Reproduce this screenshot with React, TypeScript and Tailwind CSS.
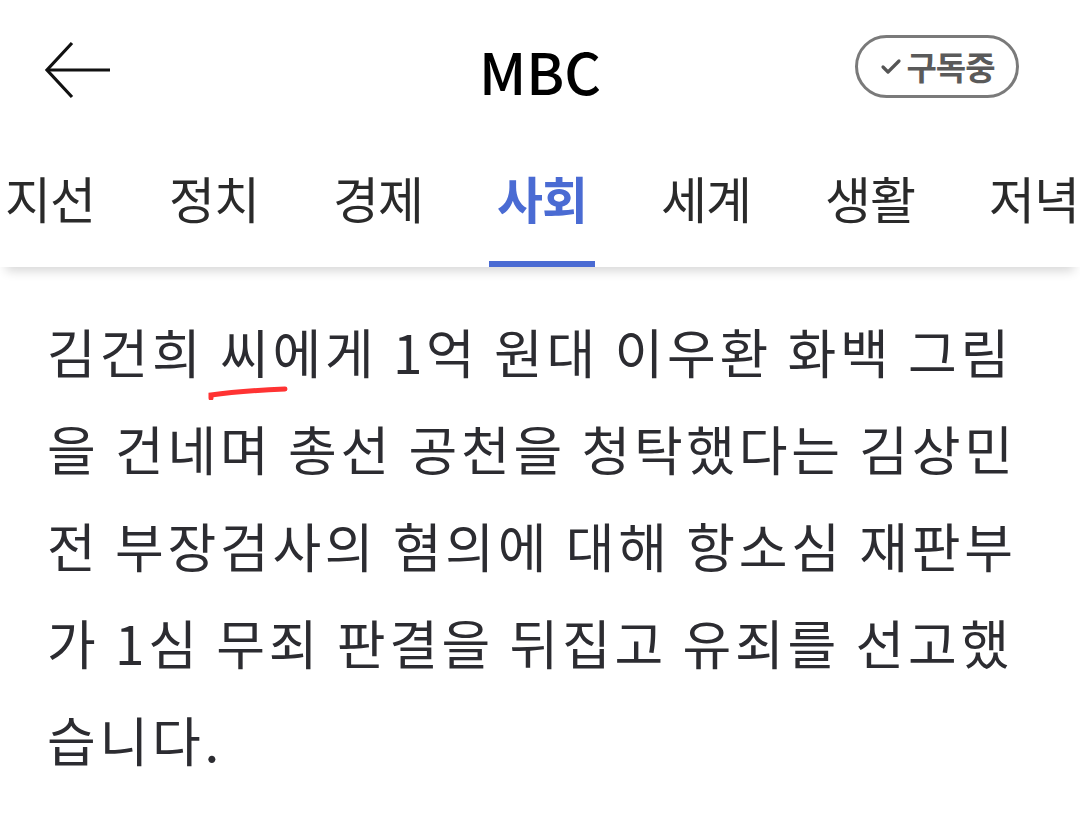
import { Check } from "lucide-react"

const tabs = ["지선", "정치", "경제", "사회", "세계", "생활", "저녁"]

const lines = [
  "김건희 씨에게 1억 원대 이우환 화백 그림",
  "을 건네며 총선 공천을 청탁했다는 김상민",
  "전 부장검사의 혐의에 대해 항소심 재판부",
  "가 1심 무죄 판결을 뒤집고 유죄를 선고했",
  "습니다.",
]

const font = { fontFamily: '"Noto Sans CJK KR", "Noto Sans", sans-serif' }

const BackArrow = () => (
  <svg width="68" height="58" viewBox="0 0 68 58" fill="none" stroke="#111" strokeWidth="3.2">
    <path d="M28 2 L3 29 L28 56" strokeLinejoin="miter" />
    <path d="M3 29 H66" />
  </svg>
)

const Header = () => (
  <div className="relative flex h-[140px] items-center justify-center">
    <div className="absolute left-[44px] top-[41px]">
      <BackArrow />
    </div>
    <span className="text-[57px] font-medium leading-none text-black">MBC</span>
    <div className="absolute right-[61px] top-[35px] flex h-[63px] w-[164px] items-center justify-center gap-[3px] rounded-full border-[3px] border-[#7a7a7a]">
      <Check size={24} strokeWidth={3.2} className="text-[#555]" />
      <span className="text-[33px] font-bold leading-none tracking-[-1px] text-[#5a5a5a]">구독중</span>
    </div>
  </div>
)

const TabBar = () => (
  <div className="relative z-10 h-[127px] bg-white shadow-[0_10px_10px_-6px_rgba(0,0,0,0.16)]">
    <div className="ml-[-3px] flex h-full items-stretch gap-[58px] overflow-hidden">
      {tabs.map((t) => {
        const on = t === "사회"
        return (
          <div key={t} className="relative flex shrink-0 items-center px-[8px] pb-[14px]">
            <span
              className={
                on
                  ? "text-[50px] font-bold leading-none tracking-[-1px] text-[#4a6bd3]"
                  : "text-[50px] font-normal leading-none tracking-[-1px] text-[#2a2a2a]"
              }
            >
              {t}
            </span>
            {on && <div className="absolute bottom-0 left-0 right-0 h-[6px] bg-[#4a6bd3]" />}
          </div>
        )
      })}
    </div>
  </div>
)

const Article = () => (
  <div className="px-[47px] pt-[36px] text-[53px] leading-[97px] tracking-[3.7px] text-[#2c2c31]">
    {lines.map((l, i) => (
      <div key={i} className="relative whitespace-nowrap">
        {i === 0 ? (
          <>
            김건희{" "}
            <span className="relative">
              씨
              {/* hand-drawn red underline */}
              <svg
                className="absolute left-[-13px] top-[73px]"
                width="82"
                height="14"
                viewBox="0 0 82 14"
                fill="none"
              >
                <path d="M4 12 L4 9 Q32 5 78 3" stroke="#ff3333" strokeWidth="5" strokeLinecap="round" />
              </svg>
            </span>
            에게 1억 원대 이우환 화백 그림
          </>
        ) : (
          l
        )}
      </div>
    ))}
  </div>
)

export default function App() {
  return (
    <div className="h-[814px] w-[1080px] overflow-hidden bg-white" style={font}>
      <Header />
      <TabBar />
      <Article />
    </div>
  )
}
